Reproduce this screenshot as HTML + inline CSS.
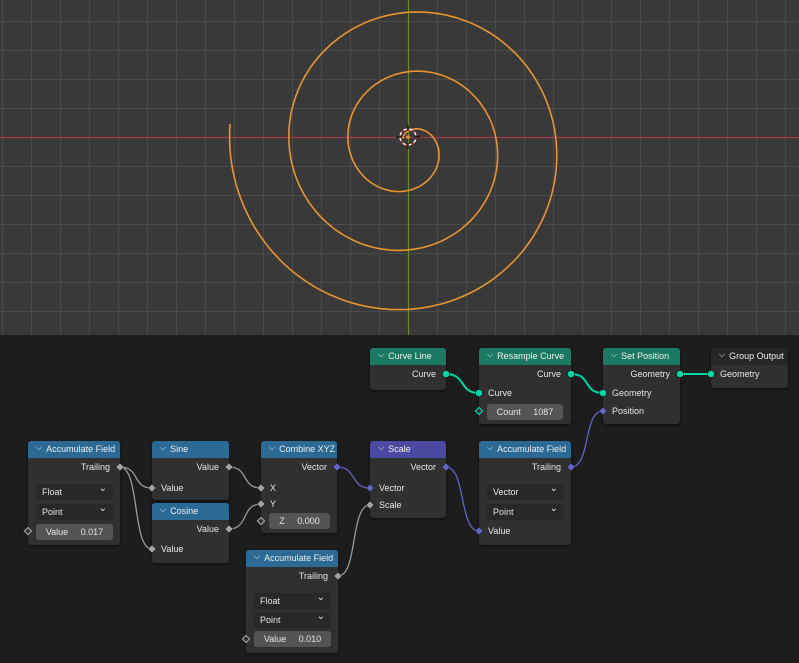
<!DOCTYPE html>
<html><head><meta charset="utf-8"><style>
*{margin:0;padding:0;box-sizing:border-box}
body{width:799px;height:663px;overflow:hidden;background:#1d1d1d;font-family:"Liberation Sans",sans-serif;font-size:9px;color:#e6e6e6;position:relative}
#vp{position:absolute;left:0;top:0;width:799px;height:335px;background:#393939;overflow:hidden}
.n{position:absolute;background:#303030;border-radius:3px;box-shadow:0 1px 3px rgba(0,0,0,.6)}
.h{height:17px;border-radius:3px 3px 0 0;padding-left:8px;line-height:17px;color:#eee;white-space:nowrap;font-size:9px}
.h:before{content:"⌵";font-size:8px;margin-right:4px;position:relative;top:-2px}
.g{background:#1c7a62}.b{background:#2a6a94}.p{background:#4a4aa0}.d{background:#262626}
.t{position:absolute;font-size:9px;white-space:nowrap}
.r{text-align:right}
.f{position:absolute;background:#3d3d3d;border-radius:3px;height:16px;line-height:16px;padding-left:6px;font-size:9px}
.f.dd{background:#282828}
.f.dd:after{content:"⌄";position:absolute;right:6px;top:-3px;font-size:10px}
.f.v{background:#545454;text-align:center;padding:0}
</style></head><body>
<div id="vp"><svg width="799" height="335" style="position:absolute;left:0;top:0">
<g id="grid" stroke="#4a4a4a" stroke-width="1"></g>
<line x1="0" y1="137.5" x2="799" y2="137.5" stroke="#a63a48" stroke-width="1.2"/>
<line x1="408.5" y1="0" x2="408.5" y2="335" stroke="#6a8a2a" stroke-width="1.2"/>
<path id="sp" fill="none" stroke="#e8952e" stroke-width="1.6"/>
<circle cx="408" cy="137" r="8" fill="none" stroke="#c03030" stroke-width="1.5" stroke-dasharray="3 3"/>
<circle cx="408" cy="137" r="8" fill="none" stroke="#fff" stroke-width="1.5" stroke-dasharray="3 3" stroke-dashoffset="3"/>
<path d="M396 137H402M414 137H420M408 125V131M408 143V149" stroke="#111" stroke-width="1.3"/>
<circle cx="408" cy="137" r="1.8" fill="#e8952e"/>
</svg></div>
<svg width="799" height="663" style="position:absolute;left:0;top:0" fill="none" stroke-width="1.3">
<g stroke="#9a9a9a">
<path d="M120 467C140 467 132 488 152 488"/>
<path d="M120 467C140 467 132 549 152 549"/>
<path d="M229 467C249 467 241 488 261 488"/>
<path d="M229 529C249 529 241 504 261 504"/>
<path d="M338 576C358 576 350 505 370 505"/>
</g>
<g stroke="#6363c7">
<path d="M337 467C357 467 350 488 370 488"/>
<path d="M446 467C466 467 459 531 479 531"/>
<path d="M571 467C591 467 583 411 603 411"/>
</g>
<g stroke="#00d6a3" stroke-width="2">
<path d="M446 374C466 374 459 393 479 393"/>
<path d="M571 374C591 374 583 393 603 393"/>
<path d="M680 374H711"/>
</g>
</svg>

<div class="n" style="left:370px;top:348px;width:76px;height:42px"><div class="h g">Curve Line</div>
<div class="t r" style="right:10px;top:21px">Curve</div></div>
<div class="n" style="left:479px;top:348px;width:92px;height:76px"><div class="h g">Resample Curve</div>
<div class="t r" style="right:10px;top:21px">Curve</div>
<div class="t" style="left:9px;top:40px">Curve</div>
<div class="f v" style="left:8px;top:56px;width:76px">Count&nbsp;&nbsp;&nbsp;&nbsp;&nbsp;1087</div></div>
<div class="n" style="left:603px;top:348px;width:77px;height:76px"><div class="h g">Set Position</div>
<div class="t r" style="right:10px;top:21px">Geometry</div>
<div class="t" style="left:9px;top:40px">Geometry</div>
<div class="t" style="left:9px;top:58px">Position</div></div>
<div class="n" style="left:711px;top:348px;width:77px;height:40px"><div class="h d">Group Output</div>
<div class="t" style="left:9px;top:21px">Geometry</div></div>

<div class="n" style="left:28px;top:441px;width:92px;height:104px"><div class="h b">Accumulate Field</div>
<div class="t r" style="right:10px;top:21px">Trailing</div>
<div class="f dd" style="left:8px;top:43px;width:77px">Float</div>
<div class="f dd" style="left:8px;top:63px;width:77px">Point</div>
<div class="f v" style="left:8px;top:83px;width:77px">Value&nbsp;&nbsp;&nbsp;&nbsp;&nbsp;0.017</div></div>
<div class="n" style="left:152px;top:441px;width:77px;height:59px"><div class="h b">Sine</div>
<div class="t r" style="right:10px;top:21px">Value</div>
<div class="t" style="left:9px;top:42px">Value</div></div>
<div class="n" style="left:152px;top:503px;width:77px;height:60px"><div class="h b">Cosine</div>
<div class="t r" style="right:10px;top:21px">Value</div>
<div class="t" style="left:9px;top:41px">Value</div></div>
<div class="n" style="left:261px;top:441px;width:76px;height:92px"><div class="h b">Combine XYZ</div>
<div class="t r" style="right:10px;top:21px">Vector</div>
<div class="t" style="left:9px;top:42px">X</div>
<div class="t" style="left:9px;top:58px">Y</div>
<div class="f v" style="left:8px;top:72px;width:61px">Z&nbsp;&nbsp;&nbsp;&nbsp;&nbsp;0.000</div></div>
<div class="n" style="left:370px;top:441px;width:76px;height:77px"><div class="h p">Scale</div>
<div class="t r" style="right:10px;top:21px">Vector</div>
<div class="t" style="left:9px;top:42px">Vector</div>
<div class="t" style="left:9px;top:59px">Scale</div></div>
<div class="n" style="left:479px;top:441px;width:92px;height:104px"><div class="h b">Accumulate Field</div>
<div class="t r" style="right:10px;top:21px">Trailing</div>
<div class="f dd" style="left:8px;top:43px;width:77px">Vector</div>
<div class="f dd" style="left:8px;top:63px;width:77px">Point</div>
<div class="t" style="left:9px;top:85px">Value</div></div>
<div class="n" style="left:246px;top:550px;width:92px;height:103px"><div class="h b">Accumulate Field</div>
<div class="t r" style="right:10px;top:21px">Trailing</div>
<div class="f dd" style="left:8px;top:43px;width:77px">Float</div>
<div class="f dd" style="left:8px;top:62px;width:77px">Point</div>
<div class="f v" style="left:8px;top:81px;width:77px">Value&nbsp;&nbsp;&nbsp;&nbsp;&nbsp;0.010</div></div>

<svg width="799" height="663" style="position:absolute;left:0;top:0" id="sk"></svg>
<script>
var g=document.getElementById('grid'),s='';
for(var x=408-29*15;x<800;x+=29)s+='<line x1="'+(x+.5)+'" y1="0" x2="'+(x+.5)+'" y2="335"/>';
for(var y=137-29*5;y<336;y+=29)s+='<line x1="0" y1="'+(y+.5)+'" x2="799" y2="'+(y+.5)+'"/>';
g.innerHTML=s;
var d='',cx=408,cy=146;
for(var t=0.3*Math.PI;t<=6*Math.PI+0.15;t+=0.03){var r=29.7*t/Math.PI,f=t-Math.PI;d+=(d?'L':'M')+(cx+r*Math.cos(f)).toFixed(1)+' '+(cy+r*Math.sin(f)).toFixed(1);}
document.getElementById('sp').setAttribute('d',d);
var sk=[[120,467,'#a1a1a1',0],[229,467,'#a1a1a1',0],[152,488,'#a1a1a1',0],[229,529,'#a1a1a1',0],[152,549,'#a1a1a1',0],
[261,488,'#a1a1a1',0],[261,504,'#a1a1a1',0],[261,521,'#a1a1a1',2],[337,467,'#6363c7',0],[370,488,'#6363c7',0],[370,505,'#a1a1a1',0],
[446,467,'#6363c7',0],[571,467,'#6363c7',0],[479,531,'#6363c7',0],[338,576,'#a1a1a1',0],[28,531,'#a1a1a1',2],[246,639,'#a1a1a1',2],
[446,374,'#00d6a3',1],[479,393,'#00d6a3',1],[479,411,'#00d6a3',3],[571,374,'#00d6a3',1],[680,374,'#00d6a3',1],[603,393,'#00d6a3',1],[603,411,'#6363c7',0],[711,374,'#00d6a3',1]],o='';
sk.forEach(function(k){var x=k[0],y=k[1],c=k[2];
if(k[3]==1)o+='<circle cx="'+x+'" cy="'+y+'" r="3.6" fill="'+c+'" stroke="#111" stroke-width=".6"/>';
else if(k[3]>=2)o+='<path d="M'+x+' '+(y-3.5)+'L'+(x+3.5)+' '+y+'L'+x+' '+(y+3.5)+'L'+(x-3.5)+' '+y+'Z" fill="#303030" stroke="'+c+'" stroke-width="1.2"/>';
else o+='<path d="M'+x+' '+(y-4)+'L'+(x+4)+' '+y+'L'+x+' '+(y+4)+'L'+(x-4)+' '+y+'Z" fill="'+c+'" stroke="#111" stroke-width=".5"/>';});
document.getElementById('sk').innerHTML=o;
</script>
</body></html>
